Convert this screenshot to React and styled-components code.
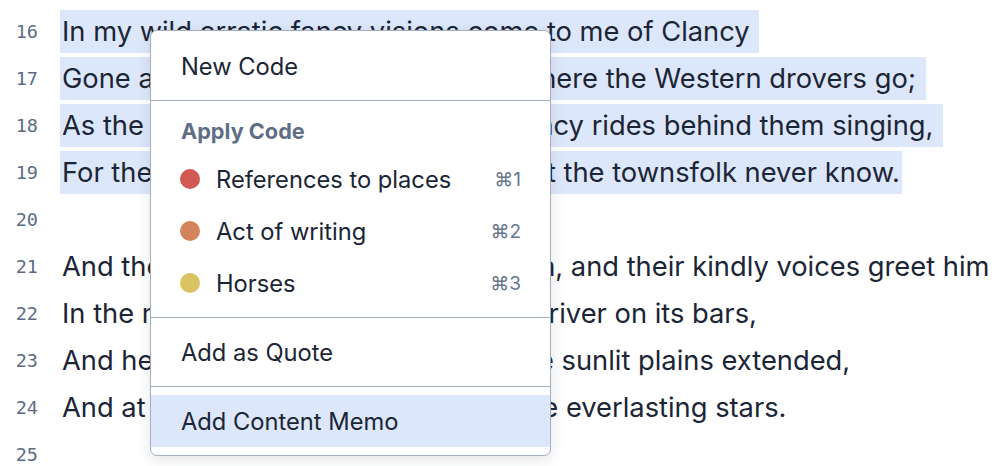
import React from 'react'
import styled, {createGlobalStyle} from 'styled-components'

const GlobalStyle = createGlobalStyle`
  html, body {
    margin: 0;
    background: #ffffff;
    overflow: hidden;
  }
  body {
    font-family: Inter, 'Noto Sans', sans-serif;
    color: #1b2535;
    -webkit-font-smoothing: antialiased;
  }
`

const Editor = styled('div')`
  position: relative;
  width: 1008px;
  height: 466px;
  padding-top: 8px;
  box-sizing: border-box;
  overflow: hidden;
`

const Line = styled('div')`
  display: flex;
  align-items: center;
  height: 47px;
`

const Gutter = styled('span')`
  width: 38px;
  flex: none;
  text-align: right;
  font-family: 'DejaVu Sans Mono', 'Liberation Mono', monospace;
  font-size: 18.5px;
  color: #5b6b84;
`

const Text = styled('span')`
  margin-left: 22px;
  padding: 0 2px;
  line-height: 43px;
  font-size: 27.3px;
  white-space: pre;
  color: #1b2535;
  background: ${props => props.selected ? '#dde7fb' : 'transparent'};
`

const Menu = styled('div')`
  position: absolute;
  left: 150px;
  top: 30px;
  width: 401px;
  box-sizing: border-box;
  padding: 9px 0 8px;
  background: #ffffff;
  border: 1px solid #a3afc1;
  border-radius: 7px;
  box-shadow: 0 4px 14px rgba(30, 40, 60, 0.12);
`

const Item = styled('div')`
  display: flex;
  align-items: center;
  height: 52px;
  padding: 0 29px 0 30px;
  font-size: 23.7px;
  color: #1b2535;
  background: ${props => props.active ? '#dde7fb' : 'transparent'};
`

const Header = styled('div')`
  display: flex;
  align-items: center;
  height: 44px;
  padding: 0 30px;
  font-size: 21.7px;
  font-weight: 700;
  color: #5f6e87;
`

const Divider = styled('div')`
  height: 1px;
  margin: 8px 0;
  background: #a3afc1;
`

const Dot = styled('span')`
  width: 20px;
  height: 20px;
  border-radius: 50%;
  margin: 0 16px 0 -1px;
  flex: none;
  background: ${props => props.color};
`

const Label = styled('span')`
  flex: 1;
`

const Shortcut = styled('span')`
  font-size: 19px;
  color: #66758c;
`

const lines = [
  {n: 16, text: 'In my wild erratic fancy visions come to me of Clancy ', sel: true},
  {n: 17, text: "Gone a-droving 'down the Cooper' where the Western drovers go; ", sel: true},
  {n: 18, text: 'As the stock are slowly stringing, Clancy rides behind them singing, ', sel: true},
  {n: 19, text: "For the drover's life has pleasures that the townsfolk never know.", sel: true},
  {n: 20, text: ''},
  {n: 21, text: 'And the bush hath friends to meet him, and their kindly voices greet him'},
  {n: 22, text: 'In the murmur of the breezes and the river on its bars,'},
  {n: 23, text: 'And he sees the vision splendid of the sunlit plains extended,'},
  {n: 24, text: 'And at night the wondrous glory of the everlasting stars.'},
  {n: 25, text: ''},
]

const codes = [
  {name: 'References to places', color: '#d25853', key: '⌘1'},
  {name: 'Act of writing', color: '#d4845a', key: '⌘2'},
  {name: 'Horses', color: '#dbc263', key: '⌘3'},
]

export default function App() {
  return (
    <Editor>
      <GlobalStyle />
      {lines.map(l => (
        <Line key={l.n}>
          <Gutter>{l.n}</Gutter>
          <Text selected={l.sel}>{l.text}</Text>
        </Line>
      ))}
      <Menu>
        <Item>New Code</Item>
        <Divider />
        <Header>Apply Code</Header>
        {codes.map(c => (
          <Item key={c.name}>
            <Dot color={c.color} />
            <Label>{c.name}</Label>
            <Shortcut>{c.key}</Shortcut>
          </Item>
        ))}
        <Divider />
        <Item>Add as Quote</Item>
        <Divider />
        <Item active>Add Content Memo</Item>
      </Menu>
    </Editor>
  )
}
